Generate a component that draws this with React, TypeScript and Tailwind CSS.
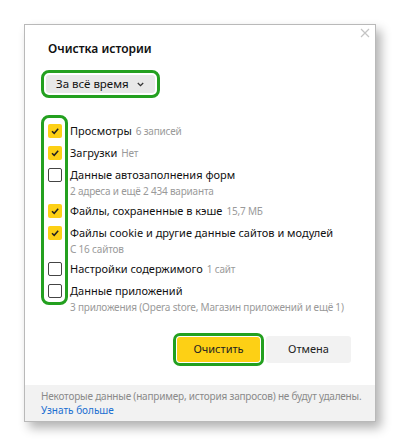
import React from "react";

type Item = { label: string; extra?: string; sub?: string; checked: boolean };

const items: Item[] = [
  { label: "Просмотры", extra: "6 записей", checked: true },
  { label: "Загрузки", extra: "Нет", checked: true },
  { label: "Данные автозаполнения форм", sub: "2 адреса и ещё 2 434 варианта", checked: false },
  { label: "Файлы, сохраненные в кэше", extra: "15,7 МБ", checked: true },
  { label: "Файлы cookie и другие данные сайтов и модулей", sub: "С 16 сайтов", checked: true },
  { label: "Настройки содержимого", extra: "1 сайт", checked: false },
  { label: "Данные приложений", sub: "3 приложения (Opera store, Магазин приложений и ещё 1)", checked: false },
];

function Box({ checked }: { checked: boolean }) {
  if (checked) {
    return (
      <div className="w-[14px] h-[14px] rounded-[2px] bg-[#fdd015] flex items-center justify-center shrink-0">
        <svg width="10" height="10" viewBox="0 0 10 10">
          <path d="M2 5.2 L4.2 7.3 L8.2 2.8" fill="none" stroke="#222" strokeWidth="1.5" />
        </svg>
      </div>
    );
  }
  return <div className="w-[14px] h-[14px] rounded-[2px] border-[1.5px] border-[#444] bg-white shrink-0" />;
}

export default function App() {
  return (
    <div
      className="w-[400px] h-[447px] bg-white pt-[24px] pl-[24px]"
      style={{ fontFamily: '"Noto Sans", "Open Sans", sans-serif' }}
    >
      <div className="w-[352px] h-[398px] bg-white border border-[#b9b9b9] shadow-[5px_6px_10px_rgba(0,0,0,0.3)] flex flex-col relative">
        <svg className="absolute top-[3px] right-[5px]" width="10" height="10" viewBox="0 0 10 10">
          <path d="M1 1 L9 9 M9 1 L1 9" stroke="#c4c4c4" strokeWidth="1.2" />
        </svg>

        <div className="pt-[14px] pl-[23px] text-[12px] leading-[20px] font-semibold text-[#111]">
          Очистка истории
        </div>

        <div className="mt-[11px] ml-[16px] w-fit border-[3px] border-[#23a01f] rounded-[8px] p-[2px]">
          <div className="h-[18px] bg-[#e8e8e8] rounded-[3px] pl-[10px] pr-[11px] flex items-center gap-[8px] text-[11.5px] text-[#111]">
            <span>За всё время</span>
            <svg width="7" height="5" viewBox="0 0 7 5">
              <path d="M0.8 1 L3.5 3.7 L6.2 1" fill="none" stroke="#333" strokeWidth="1.3" />
            </svg>
          </div>
        </div>

        <div className="relative mt-[24px] ml-[23px] flex flex-col gap-[4px]">
          <div className="absolute left-[-7px] top-[-7px] w-[27px] h-[190px] border-[3px] border-[#23a01f] rounded-[8px]" />
          {items.map((it) => (
            <div key={it.label} className="flex flex-col">
              <div className="flex items-center h-[18px]">
                <Box checked={it.checked} />
                <span className="ml-[8px] text-[11px] text-[#111] whitespace-nowrap">
                  {it.label}
                  {it.extra && <span className="ml-[4px] text-[10px] tracking-[-0.2px] text-[#9a9a9a]">{it.extra}</span>}
                </span>
              </div>
              {it.sub && (
                <div className="pl-[22px] text-[10px] leading-[14px] tracking-[-0.2px] text-[#9a9a9a] whitespace-nowrap">{it.sub}</div>
              )}
            </div>
          ))}
        </div>

        <div className="mt-[19px] flex items-center justify-end pr-[24px] gap-[2px]">
          <div className="border-[3px] border-[#23a01f] rounded-[7px] p-[1px]">
            <div className="w-[83px] h-[25px] bg-[#fdd015] rounded-[3px] flex items-center justify-center text-[11px] text-[#222]">
              Очистить
            </div>
          </div>
          <div className="w-[85px] h-[27px] bg-[#f2f2f2] rounded-[3px] flex items-center justify-center text-[11px] text-[#222]">
            Отмена
          </div>
        </div>

        <div className="mt-auto h-[36px] bg-[#f2f2f2] pl-[16px] pt-[4px] text-[10px] leading-[14px] tracking-[-0.2px]">
          <div className="text-[#8a8a8a] whitespace-nowrap">Некоторые данные (например, история запросов) не будут удалены.</div>
          <div className="text-[#1a6fd1] tracking-normal">Узнать больше</div>
        </div>
      </div>
    </div>
  );
}
